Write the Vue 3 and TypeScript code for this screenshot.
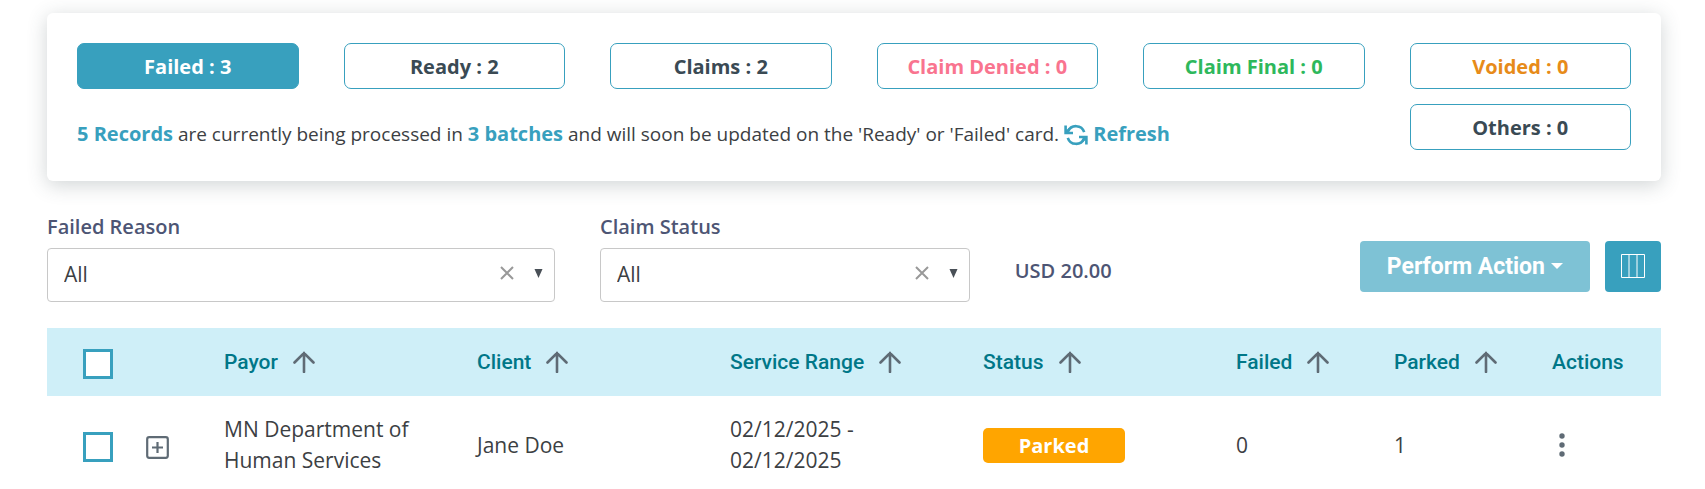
<script setup lang="ts">
import { ref } from 'vue'

interface StatusCard { label: string; count: number; tone: string }
interface Column { key: string; title: string; sortable: boolean }

const cards: StatusCard[] = [
  { label: 'Failed', count: 3, tone: 'active' },
  { label: 'Ready', count: 2, tone: 'plain' },
  { label: 'Claims', count: 2, tone: 'plain' },
  { label: 'Claim Denied', count: 0, tone: 'denied' },
  { label: 'Claim Final', count: 0, tone: 'final' },
  { label: 'Voided', count: 0, tone: 'voided' },
  { label: 'Others', count: 0, tone: 'plain' },
]

const columns: Column[] = [
  { key: 'payor', title: 'Payor', sortable: true },
  { key: 'client', title: 'Client', sortable: true },
  { key: 'range', title: 'Service Range', sortable: true },
  { key: 'status', title: 'Status', sortable: true },
  { key: 'failed', title: 'Failed', sortable: true },
  { key: 'parked', title: 'Parked', sortable: true },
  { key: 'actions', title: 'Actions', sortable: false },
]

const rows = [
  { id: 1, payor: 'MN Department of Human Services', client: 'Jane Doe', range: '02/12/2025 - 02/12/2025', status: 'Parked', failed: 0, parked: 1 },
]

const failedReason = ref('All')
const claimStatus = ref('All')
const selected = ref<number[]>([])
function toggleAll(e: Event) {
  selected.value = (e.target as HTMLInputElement).checked ? rows.map((r) => r.id) : []
}
</script>

<template>
  <main class="page">
    <section class="summary">
      <button v-for="c in cards" :key="c.label" type="button" class="card" :class="c.tone">
        {{ c.label }} : {{ c.count }}
      </button>
      <p class="message">
        <strong>5 Records</strong> are currently being processed in <strong>3 batches</strong> and will soon be
        updated on the 'Ready' or 'Failed' card.
        <a href="#" class="refresh"><svg class="refresh-icon" viewBox="0 0 24 22" aria-hidden="true">
          <path d="M4 7.6A8.6 8.6 0 0 1 20.2 8.2M20 14.4A8.6 8.6 0 0 1 3.8 13.8" fill="none" stroke="currentColor" stroke-width="2.6" />
          <path d="M1.6 1.6V9H9M22.4 20.4V13H15M1.8 8.8L5.5 5M22.2 13.2L18.5 17" fill="none" stroke="currentColor" stroke-width="2.6" />
        </svg> Refresh</a>
      </p>
    </section>

    <section class="filters">
      <div class="field reason">
        <label for="failed-reason">Failed Reason</label>
        <div class="select-box">
          <select id="failed-reason" v-model="failedReason"><option>All</option></select>
          <button type="button" class="clear" aria-label="Clear failed reason" @click="failedReason = 'All'">
            <svg viewBox="0 0 14 14"><path d="M1 1L13 13M13 1L1 13" /></svg>
          </button>
          <svg class="caret" viewBox="0 0 8 9" aria-hidden="true"><path d="M0 0H8L4 9Z" /></svg>
        </div>
      </div>
      <div class="field status">
        <label for="claim-status">Claim Status</label>
        <div class="select-box">
          <select id="claim-status" v-model="claimStatus"><option>All</option></select>
          <button type="button" class="clear" aria-label="Clear claim status" @click="claimStatus = 'All'">
            <svg viewBox="0 0 14 14"><path d="M1 1L13 13M13 1L1 13" /></svg>
          </button>
          <svg class="caret" viewBox="0 0 8 9" aria-hidden="true"><path d="M0 0H8L4 9Z" /></svg>
        </div>
      </div>
      <div class="tools">
        <span class="amount">USD 20.00</span>
        <button type="button" class="perform">
          Perform Action
          <svg viewBox="0 0 12 6" aria-hidden="true"><path d="M0 0H12L6 6Z" /></svg>
        </button>
        <button type="button" class="columns" aria-label="Choose columns">
          <svg viewBox="0 0 24 24"><path d="M.5 .5H23.5V23.5H.5ZM8 .5V23.5M16 .5V23.5" /></svg>
        </button>
      </div>
    </section>

    <table class="claims">
      <colgroup>
        <col class="w-check" /><col class="w-expand" />
        <col class="w-wide" /><col class="w-wide" /><col class="w-wide" /><col class="w-wide" />
        <col class="w-num" /><col class="w-num" /><col />
      </colgroup>
      <thead>
        <tr>
          <th class="check"><input type="checkbox" aria-label="Select all claims" @change="toggleAll" /></th>
          <th></th>
          <th v-for="c in columns" :key="c.key" scope="col">
            <span class="heading">
              {{ c.title }}
              <button v-if="c.sortable" type="button" class="sort" :aria-label="'Sort by ' + c.title">
                <svg viewBox="0 0 22 22"><path d="M11 21V2M1.5 11.5L11 2L20.5 11.5" /></svg>
              </button>
            </span>
          </th>
        </tr>
      </thead>
      <tbody>
        <tr v-for="r in rows" :key="r.id">
          <td class="check"><input v-model="selected" type="checkbox" :value="r.id" aria-label="Select claim" /></td>
          <td class="expand">
            <button type="button" aria-label="Expand row">
              <svg viewBox="0 0 23 23"><rect x="1.2" y="1.2" width="20.6" height="20.6" rx="2" /><path d="M11.5 6V17M6 11.5H17" /></svg>
            </button>
          </td>
          <td class="payor">{{ r.payor }}</td>
          <td>{{ r.client }}</td>
          <td class="range">{{ r.range }}</td>
          <td><span class="badge">{{ r.status }}</span></td>
          <td>{{ r.failed }}</td>
          <td>{{ r.parked }}</td>
          <td class="more">
            <button type="button" aria-label="Row actions">
              <svg viewBox="0 0 6 24"><circle cx="3" cy="3" r="2.7" /><circle cx="3" cy="12" r="2.7" /><circle cx="3" cy="21" r="2.7" /></svg>
            </button>
          </td>
        </tr>
      </tbody>
    </table>
  </main>
</template>

<style>
body { background: #fff; }
</style>

<style scoped>
* { box-sizing: border-box; }
.page { padding: 13px 44px 0 47px; font-family: "Open Sans", "Noto Sans", sans-serif; font-size: 20px; color: #3c4043; }
button { font: inherit; cursor: pointer; }
svg { display: block; }
.summary {
  display: grid; grid-template-columns: repeat(6, minmax(0, 1fr)); gap: 15px 45px;
  padding: 30px 30px 31px; border-radius: 6px; background: #fff; box-shadow: 0 4px 20px rgba(60, 75, 80, 0.24);
}
.card {
  height: 46px; padding: 0; border: 1px solid #38a0be; border-radius: 7px;
  background: #fff; color: #3a4a54; font-weight: 700;
}
.card.active { background: #38a0be; color: #fff; }
.card.denied { color: #f9748f; }
.card.final { color: #2eb85c; }
.card.voided { color: #e78b19; }
.card:last-of-type { grid-column: 6; grid-row: 2; }
.message { grid-column: 1 / 6; grid-row: 2; margin: 0; padding-top: 16px; font-size: 19px; line-height: 28px; }
.message strong, .refresh { color: #38a0be; font-size: 20px; font-weight: 700; text-decoration: none; }
.refresh-icon { display: inline-block; width: 24px; height: 22px; vertical-align: -5px; }

.filters { display: grid; grid-template-columns: repeat(12, minmax(0, 1fr)); column-gap: 45px; margin-top: 32px; }
.reason { grid-column: span 4; }
.status { grid-column: span 3; }
.tools { grid-column: span 5; display: flex; align-items: center; padding-top: 17px; }
.field label { display: block; margin-bottom: 7px; line-height: 28px; color: #4d5574; font-weight: 600; }
.select-box { position: relative; }
select {
  appearance: none; display: block; width: 100%; height: 54px; padding: 0 16px 2px;
  border: 1px solid #c8c8c8; border-radius: 4px; background: #fff; color: #3c4043; font: inherit; font-size: 21px;
}
.clear { position: absolute; right: 41px; top: 18px; padding: 0; border: 0; background: none; }
.clear svg { width: 14px; height: 14px; fill: none; stroke: #999; stroke-width: 2; }
.caret { position: absolute; right: 12px; top: 21px; width: 9px; height: 9px; fill: #495057; pointer-events: none; }
.amount { margin-right: auto; padding-top: 8px; color: #4d5574; font-weight: 600; }
.perform, .columns {
  display: flex; align-items: center; justify-content: center; height: 51px; border: 0; border-radius: 4px; color: #fff;
}
.perform { gap: 6px; padding: 0 27px; background: #7ec2d5; font-family: Roboto, sans-serif; font-size: 23px; font-weight: 700; }
.perform svg { width: 12px; height: 6px; fill: #fff; }
.columns { width: 56px; margin-left: 15px; background: #38a0be; }
.columns svg { width: 24px; height: 24px; fill: none; stroke: #fff; }

.claims { width: 100%; margin-top: 26px; border-collapse: collapse; table-layout: fixed; font-size: 21px; line-height: 31px; }
.w-check { width: 96px; }
.w-expand { width: 81px; }
.w-wide { width: 253px; }
.w-num { width: 158px; }
th, td { padding: 0; text-align: left; vertical-align: middle; }
th { height: 68px; background: #cfeff8; color: #007788; font-family: Roboto, sans-serif; font-weight: 500; }
.heading { display: flex; align-items: center; gap: 15px; }
.sort, .expand button, .more button { display: block; padding: 0; border: 0; background: none; }
.sort svg { width: 22px; height: 22px; fill: none; stroke: #5f6b75; stroke-width: 2.6; stroke-linecap: round; }
td { height: 98px; }
.claims .check { padding: 4px 0 0 36px; }
input[type="checkbox"] {
  appearance: none; display: block; width: 30px; height: 30px; margin: 0; border: 3px solid #38a0be; background: #fff;
}
input[type="checkbox"]:checked { background: #38a0be; }
.expand svg { width: 23px; height: 23px; fill: none; stroke: #5f6b75; stroke-width: 2.2; }
.claims .expand { padding: 5px 0 0 3px; }
.claims .payor { padding-right: 60px; }
.claims .range { padding-right: 100px; }
.badge {
  display: block; width: 142px; border-radius: 5px; background: #ffa500; color: #fff;
  font-size: 20px; font-weight: 700; line-height: 35px; text-align: center;
}
.claims .more { padding-left: 7px; }
.more svg { width: 6px; height: 24px; fill: #5f6b75; }
</style>
